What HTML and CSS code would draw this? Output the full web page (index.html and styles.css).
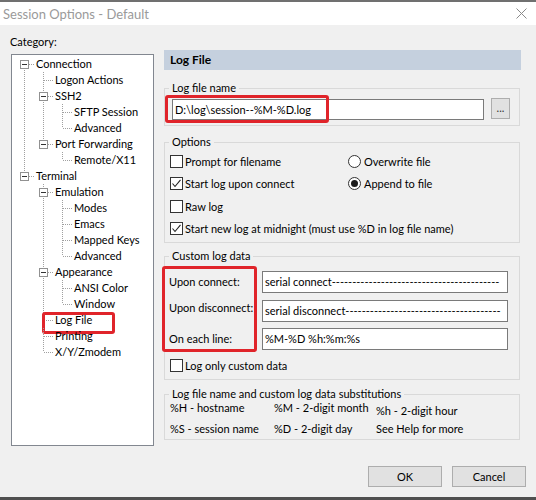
FILE: index.html
```html
<!DOCTYPE html>
<html>
<head>
<meta charset="utf-8">
<title>Session Options - Default</title>
<link rel="stylesheet" href="styles.css">
</head>
<body>
<div class="window">
  <div class="titlebar">
    <span class="title">Session Options - Default</span>
    <svg class="close" width="11" height="11" viewBox="0 0 11 11"><path d="M0.5 0.5 L10.5 10.5 M10.5 0.5 L0.5 10.5" stroke="#8a8a8a" stroke-width="1" fill="none"/></svg>
  </div>
  <div class="main">
    <div class="left">
      <div class="cat">Category:</div>
      <div class="tree">
        <div class="row"><span class="c first"><i class="bx"></i></span><span class="t">Connection</span></div>
        <div class="row"><span class="g on"></span><span class="c mid"></span><span class="t">Logon Actions</span></div>
        <div class="row"><span class="g on"></span><span class="c mid"><i class="bx"></i></span><span class="t">SSH2</span></div>
        <div class="row"><span class="g on"></span><span class="g on"></span><span class="c mid"></span><span class="t">SFTP Session</span></div>
        <div class="row"><span class="g on"></span><span class="g on"></span><span class="c last"></span><span class="t">Advanced</span></div>
        <div class="row"><span class="g on"></span><span class="c last"><i class="bx"></i></span><span class="t">Port Forwarding</span></div>
        <div class="row"><span class="g on"></span><span class="g"></span><span class="c last"></span><span class="t">Remote/X11</span></div>
        <div class="row"><span class="c last"><i class="bx"></i></span><span class="t">Terminal</span></div>
        <div class="row"><span class="g"></span><span class="c mid"><i class="bx"></i></span><span class="t">Emulation</span></div>
        <div class="row"><span class="g"></span><span class="g on"></span><span class="c mid"></span><span class="t">Modes</span></div>
        <div class="row"><span class="g"></span><span class="g on"></span><span class="c mid"></span><span class="t">Emacs</span></div>
        <div class="row"><span class="g"></span><span class="g on"></span><span class="c mid"></span><span class="t">Mapped Keys</span></div>
        <div class="row"><span class="g"></span><span class="g on"></span><span class="c last"></span><span class="t">Advanced</span></div>
        <div class="row"><span class="g"></span><span class="c mid"><i class="bx"></i></span><span class="t">Appearance</span></div>
        <div class="row"><span class="g"></span><span class="g on"></span><span class="c mid"></span><span class="t">ANSI Color</span></div>
        <div class="row"><span class="g"></span><span class="g on"></span><span class="c last"></span><span class="t">Window</span></div>
        <div class="row hl"><span class="g"></span><span class="c mid"></span><span class="t">Log File</span></div>
        <div class="row"><span class="g"></span><span class="c mid"></span><span class="t">Printing</span></div>
        <div class="row"><span class="g"></span><span class="c last"></span><span class="t">X/Y/Zmodem</span></div>
      </div>
    </div>
    <div class="right">
      <div class="header">Log File</div>

      <fieldset class="fs fs-name">
        <legend>Log file name</legend>
        <div class="namerow">
          <div class="input name"><span class="v">D:\log\session--%M-%D.log</span></div>
          <div class="browse">...</div>
          <div class="mark mark-name"></div>
        </div>
      </fieldset>

      <fieldset class="fs fs-opt">
        <legend>Options</legend>
        <div class="opts">
          <div class="item"><span class="cb"></span><span>Prompt for filename</span></div>
          <div class="item radio"><span class="rb"></span><span>Overwrite file</span></div>
          <div class="item"><span class="cb"><svg width="11" height="11" viewBox="0 0 11 11"><path d="M1.5 5.5 L4 8.5 L9.5 1.8" stroke="#222" stroke-width="1.1" fill="none"/></svg></span><span>Start log upon connect</span></div>
          <div class="item radio"><span class="rb on"><i></i></span><span>Append to file</span></div>
          <div class="item wide"><span class="cb"></span><span>Raw log</span></div>
          <div class="item wide"><span class="cb"><svg width="11" height="11" viewBox="0 0 11 11"><path d="M1.5 5.5 L4 8.5 L9.5 1.8" stroke="#222" stroke-width="1.1" fill="none"/></svg></span><span>Start new log at midnight (must use %D in log file name)</span></div>
        </div>
      </fieldset>

      <fieldset class="fs fs-custom">
        <legend>Custom log data</legend>
        <div class="custom">
          <div class="lbl">Upon connect:</div>
          <div class="input field"><span class="v">serial connect-----------------------------------------</span></div>
          <div class="lbl up">Upon disconnect:</div>
          <div class="input field"><span class="v">serial disconnect--------------------------------------</span></div>
          <div class="lbl">On each line:</div>
          <div class="input field"><span class="v">%M-%D %h:%m:%s</span></div>
          <div class="mark mark-labels"></div>
        </div>
        <div class="item only"><span class="cb"></span><span>Log only custom data</span></div>
      </fieldset>

      <fieldset class="fs fs-sub">
        <legend>Log file name and custom log data substitutions</legend>
        <div class="subs">
          <div>%H - hostname</div>
          <div>%M - 2-digit month</div>
          <div class="low">%h - 2-digit hour</div>
          <div>%S - session name</div>
          <div>%D - 2-digit day</div>
          <div>See Help for more</div>
        </div>
      </fieldset>
    </div>
  </div>
  <div class="buttons">
    <button class="btn">OK</button>
    <button class="btn">Cancel</button>
  </div>
</div>
</body>
</html>
```

FILE: styles.css
```css
* { box-sizing: border-box; }

body {
  margin: 0;
  background: #f0f0f0;
  font-family: Lato, "Noto Sans CJK SC", sans-serif;
  font-size: 11px;
  color: #000;
}

.window {
  width: 536px;
  height: 500px;
  display: flex;
  flex-direction: column;
  border-bottom: 3px solid #4f4f4f;
}

.titlebar {
  height: 25px;
  background: #fff;
  border-top: 2px solid #707070;
  display: flex;
  align-items: center;
  justify-content: space-between;
  padding: 0 9px 0 3px;
}

.title {
  font-size: 13px;
  line-height: 20px;
  color: #9a9a9a;
}

.main {
  display: flex;
  gap: 10px;
  padding: 9px 0 0 10px;
}

.left { width: 144px; }

.cat { height: 16px; line-height: 16px; }

.tree {
  margin: 4px 0 0 1px;
  width: 143px;
  height: 392px;
  background: #fff;
  border: 1px solid #828790;
  padding: 1px 0 0 5px;
}

.row {
  display: flex;
  height: 16px;
  line-height: 16px;
  position: relative;
}

.g, .c {
  flex: none;
  width: 19px;
  height: 16px;
}

.g.on {
  background: repeating-linear-gradient(to bottom, #a0a0a0 0 1px, transparent 1px 2px) 7px 0 / 1px 16px no-repeat;
}

.c {
  padding: 4px 0 0 3px;
  background-image:
    repeating-linear-gradient(to right, #a0a0a0 0 1px, transparent 1px 2px),
    repeating-linear-gradient(to bottom, #a0a0a0 0 1px, transparent 1px 2px),
    repeating-linear-gradient(to bottom, #a0a0a0 0 1px, transparent 1px 2px);
  background-position: 8px 8px, 7px 0, 7px 8px;
  background-size: 10px 1px, 1px 8px, 1px 8px;
  background-repeat: no-repeat;
}

.c.first { background-size: 10px 1px, 0 0, 1px 8px; }
.c.last { background-size: 10px 1px, 1px 8px, 0 0; }

.bx {
  display: block;
  width: 9px;
  height: 9px;
  border: 1px solid #919191;
  background: linear-gradient(#333, #333) center / 5px 1px no-repeat, #fff;
}

.t { white-space: nowrap; }

.row.hl::after {
  content: "";
  position: absolute;
  left: 25px;
  top: 0;
  width: 67px;
  height: 16px;
  border: 3px solid #e0242a;
  border-radius: 3px;
}

.right {
  width: 357px;
  display: flex;
  flex-direction: column;
}

.header {
  margin-top: 16px;
  height: 20px;
  line-height: 20px;
  background: #c5d0de;
  font-weight: bold;
  font-size: 12px;
  padding-left: 6px;
}

.fs {
  margin: 0;
  width: 356px;
  min-width: 0;
  border: 1px solid #d9d9d9;
  padding: 0 0 0 4px;
}

.fs legend {
  padding: 0 3px;
  height: 14px;
  line-height: 14px;
}

.input {
  background: #fff;
  border: 1px solid #7a7a7a;
  height: 22px;
  line-height: 20px;
  padding: 0 2px;
}

.input .v {
  display: block;
  white-space: nowrap;
}

.fs-name { margin-top: 11px; }

.namerow {
  position: relative;
  display: flex;
  align-items: flex-start;
  gap: 7px;
  padding: 3px 0 5px 3px;
}

.input.name {
  margin-top: 1px;
  width: 312px;
  height: 21px;
  line-height: 19px;
}

.browse {
  width: 19px;
  height: 21px;
  background: #e1e1e1;
  border: 1px solid #adadad;
  text-align: center;
  line-height: 17px;
  font-size: 11px;
  color: #333;
}

.mark {
  position: absolute;
  border: 3px solid #e0242a;
  border-radius: 3px;
}

.mark-name {
  left: -4px;
  top: 0;
  width: 164px;
  height: 28px;
}

.fs-opt { margin-top: 9px; }

.opts {
  display: grid;
  grid-template-columns: 179px 1fr;
  grid-auto-rows: 22.5px;
  padding: 1px 0 2px;
}

.item {
  display: flex;
  align-items: center;
  gap: 2px;
  padding-left: 1px;
  white-space: nowrap;
}

.item.wide { grid-column: 1 / -1; }

.item.radio { gap: 3px; padding-left: 0; }

.cb {
  flex: none;
  width: 13px;
  height: 13px;
  border: 1px solid #333;
  background: #fff;
  display: flex;
}

.rb {
  flex: none;
  width: 13px;
  height: 13px;
  border: 1px solid #333;
  border-radius: 50%;
  background: #fff;
  display: flex;
  align-items: center;
  justify-content: center;
}

.rb i {
  width: 7px;
  height: 7px;
  border-radius: 50%;
  background: #1c1c1c;
}

.fs-custom { margin-top: 6px; }

.custom {
  position: relative;
  display: grid;
  grid-template-columns: 93px 246px;
  grid-auto-rows: 22px;
  row-gap: 6.5px;
  padding-top: 8px;
}

.lbl {
  align-self: center;
  white-space: nowrap;
  line-height: 16px;
}

.lbl.up { margin-bottom: 6px; }

.item.only {
  height: 23px;
  margin-top: 4px;
  margin-bottom: 2px;
}

.mark-labels {
  left: -7px;
  top: 3px;
  width: 95px;
  height: 86px;
}

.fs-sub { margin-top: 7px; }

.subs {
  display: grid;
  grid-template-columns: 104px 102px 1fr;
  grid-auto-rows: 14px;
  row-gap: 7px;
  line-height: 14px;
  padding: 0 0 3px 1px;
  white-space: nowrap;
}

.subs .low { padding-top: 3px; }

.buttons {
  margin-top: auto;
  display: flex;
  justify-content: flex-end;
  gap: 10px;
  padding: 0 10px 10px 0;
}

.btn {
  width: 74px;
  height: 21px;
  padding: 0;
  background: #e1e1e1;
  border: 1px solid #adadad;
  font: inherit;
  color: #000;
  line-height: 19px;
}
```
